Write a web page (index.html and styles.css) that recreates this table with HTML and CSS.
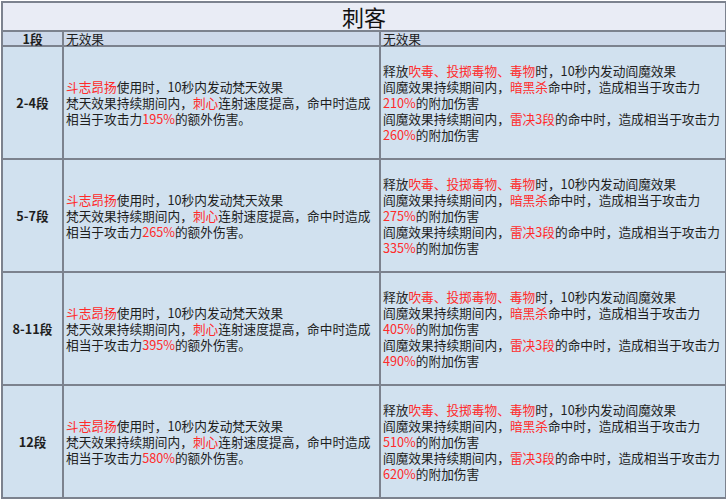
FILE: index.html
```html
<!DOCTYPE html>
<html lang="zh">
<head>
<meta charset="utf-8">
<link rel="stylesheet" href="styles.css">
</head>
<body>
<table class="grid">
  <colgroup><col class="c1"><col class="c2"><col class="c3"></colgroup>
  <tr class="title"><td colspan="3">刺客</td></tr>
  <tr class="head"><td class="lv">1段</td><td>无效果</td><td>无效果</td></tr>
  <tr class="row">
    <td class="lv">2-4段</td>
    <td><span class="r">斗志昂扬</span>使用时，10秒内发动梵天效果<br>梵天效果持续期间内，<span class="r">刺心</span>连射速度提高，命中时造成<br>相当于攻击力<span class="r">195%</span>的额外伤害。</td>
    <td>释放<span class="r">吹毒、投掷毒物、毒物</span>时，10秒内发动阎魔效果<br>阎魔效果持续期间内，<span class="r">暗黑杀</span>命中时，造成相当于攻击力<br><span class="r">210%</span>的附加伤害<br>阎魔效果持续期间内，<span class="r">雷决3段</span>的命中时，造成相当于攻击力<br><span class="r">260%</span>的附加伤害</td>
  </tr>
  <tr class="row">
    <td class="lv">5-7段</td>
    <td><span class="r">斗志昂扬</span>使用时，10秒内发动梵天效果<br>梵天效果持续期间内，<span class="r">刺心</span>连射速度提高，命中时造成<br>相当于攻击力<span class="r">265%</span>的额外伤害。</td>
    <td>释放<span class="r">吹毒、投掷毒物、毒物</span>时，10秒内发动阎魔效果<br>阎魔效果持续期间内，<span class="r">暗黑杀</span>命中时，造成相当于攻击力<br><span class="r">275%</span>的附加伤害<br>阎魔效果持续期间内，<span class="r">雷决3段</span>的命中时，造成相当于攻击力<br><span class="r">335%</span>的附加伤害</td>
  </tr>
  <tr class="row">
    <td class="lv">8-11段</td>
    <td><span class="r">斗志昂扬</span>使用时，10秒内发动梵天效果<br>梵天效果持续期间内，<span class="r">刺心</span>连射速度提高，命中时造成<br>相当于攻击力<span class="r">395%</span>的额外伤害。</td>
    <td>释放<span class="r">吹毒、投掷毒物、毒物</span>时，10秒内发动阎魔效果<br>阎魔效果持续期间内，<span class="r">暗黑杀</span>命中时，造成相当于攻击力<br><span class="r">405%</span>的附加伤害<br>阎魔效果持续期间内，<span class="r">雷决3段</span>的命中时，造成相当于攻击力<br><span class="r">490%</span>的附加伤害</td>
  </tr>
  <tr class="row">
    <td class="lv">12段</td>
    <td><span class="r">斗志昂扬</span>使用时，10秒内发动梵天效果<br>梵天效果持续期间内，<span class="r">刺心</span>连射速度提高，命中时造成<br>相当于攻击力<span class="r">580%</span>的额外伤害。</td>
    <td>释放<span class="r">吹毒、投掷毒物、毒物</span>时，10秒内发动阎魔效果<br>阎魔效果持续期间内，<span class="r">暗黑杀</span>命中时，造成相当于攻击力<br><span class="r">510%</span>的附加伤害<br>阎魔效果持续期间内，<span class="r">雷决3段</span>的命中时，造成相当于攻击力<br><span class="r">620%</span>的附加伤害</td>
  </tr>
</table>
</body>
</html>
```
FILE: styles.css
```css
html, body {
  margin: 0;
  padding: 0;
  background: #ffffff;
}
.grid {
  border-collapse: collapse;
  table-layout: fixed;
  width: 724px;
  margin: 1px 0 0 1px;
  font-family: "Noto Sans CJK SC", "DejaVu Sans", sans-serif;
  font-size: 12.7px;
  line-height: 16px;
  color: #1e1e1e;
}
.c1 { width: 61px; }
.c2 { width: 317px; }
.c3 { width: 346px; }
.grid td {
  border: 2px solid #7c828e;
  padding: 0 0 0 2px;
  vertical-align: middle;
  white-space: nowrap;
}
.title td {
  background: #e9ecf5;
  height: 27px;
  text-align: center;
  font-size: 22px;
  line-height: 27px;
  font-weight: 400;
  color: #111;
  padding: 0;
}
.head td {
  background: #cdd9ea;
  height: 13px;
  line-height: 13px;
}
.row td {
  background: #d1e1ef;
  height: 111px;
}
.grid td.lv {
  text-align: center;
  font-weight: bold;
  padding: 0;
}
.r {
  color: #ff2a2a;
}
```
